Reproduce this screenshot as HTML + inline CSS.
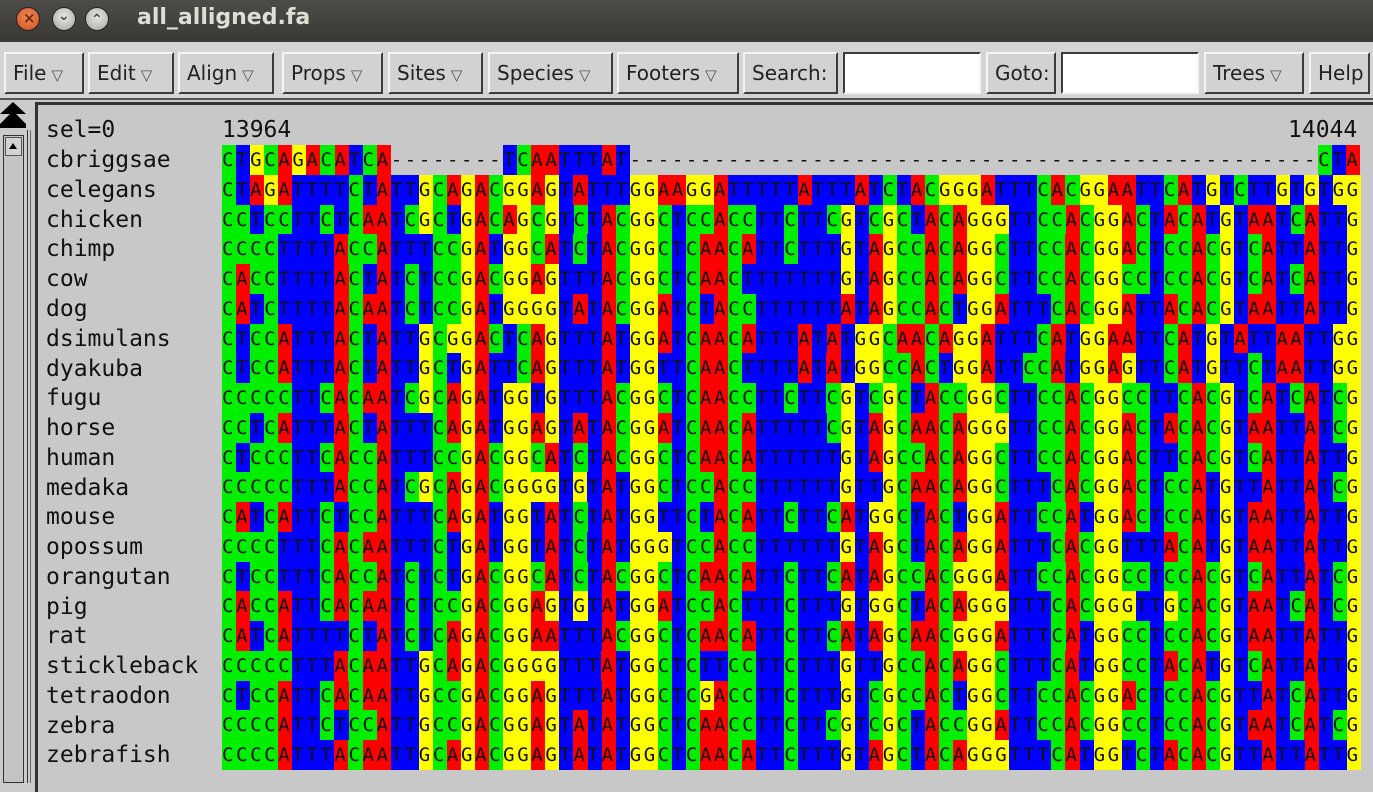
<!DOCTYPE html>
<html><head><meta charset="utf-8">
<style>
*{margin:0;padding:0;box-sizing:border-box}
body{width:1373px;height:783px;overflow:hidden;background:#cbcbcb;position:relative;font-family:"DejaVu Sans","Liberation Sans",sans-serif}
#title{position:absolute;left:0;top:0;width:1373px;height:42px;background:linear-gradient(#4d4c47,#3a3935);}
#title .t{position:absolute;left:137px;top:5px;font-size:22px;font-weight:bold;color:#e0ddd5}
.circ{position:absolute;width:24px;height:24px;border-radius:50%;top:7px}
#tb{position:absolute;left:0;top:42px;width:1373px;height:58px;background:#d4d4d4;border-bottom:2px solid #555}
.btn{position:absolute;top:10px;height:42px;background:#d2d2d2;border:2px solid;border-color:#f4f4f4 #3c3c3c #3c3c3c #f4f4f4;font-size:20px;color:#222;line-height:38px;padding-left:7px;white-space:nowrap}
.btn small{font-size:15px;color:#555;margin-left:5px}
.inp{position:absolute;top:10px;height:42px;background:#fff;border:2px solid;border-color:#3c3c3c #f4f4f4 #f4f4f4 #3c3c3c}
#panel{position:absolute;left:35px;top:102px;width:1340px;height:690px;border-left:3px solid #333;border-top:3px solid #333;background:#c8c8c8}
.nm{position:absolute;left:46px;font-family:"DejaVu Sans Mono","Liberation Mono",monospace;font-size:23px;color:#111;line-height:30px;white-space:pre}
.r{position:absolute;left:222px;height:30px;font-family:"DejaVu Sans Mono","Liberation Mono",monospace;font-size:19px;letter-spacing:2.61px;line-height:30px;color:#111;white-space:pre}
.r i,.r b,.r u,.r s,.r em{font-style:normal;font-weight:normal;text-decoration:none;display:inline-block;height:30px;vertical-align:top}
.r i{background:#ff0000}.r b{background:#00ee00}.r u{background:#ffff00}.r s{background:#0000ff}
</style></head><body>
<div id="title">
<div class="circ" style="left:16px;background:radial-gradient(circle at 50% 40%,#f08a5a,#d0501c);border:1px solid #222"><span style="position:absolute;left:6px;top:1px;font-size:15px;color:#6b2a10;font-weight:bold">×</span></div>
<div class="circ" style="left:52px;background:radial-gradient(circle at 50% 40%,#e8e6e0,#a8a6a0);border:1px solid #222"><span style="position:absolute;left:5px;top:0px;font-size:14px;color:#444;font-weight:bold">⌄</span></div>
<div class="circ" style="left:85px;background:radial-gradient(circle at 50% 40%,#e8e6e0,#a8a6a0);border:1px solid #222"><span style="position:absolute;left:5px;top:4px;font-size:14px;color:#444;font-weight:bold">⌃</span></div>
<div class="t">all_alligned.fa</div>
</div>
<div id="tb">
<div class="btn" style="left:4px;width:80px">File<small>▽</small></div>
<div class="btn" style="left:88px;width:86px">Edit<small>▽</small></div>
<div class="btn" style="left:178px;width:96px">Align<small>▽</small></div>
<div class="btn" style="left:282px;width:101px">Props<small>▽</small></div>
<div class="btn" style="left:388px;width:95px">Sites<small>▽</small></div>
<div class="btn" style="left:488px;width:125px">Species<small>▽</small></div>
<div class="btn" style="left:617px;width:122px">Footers<small>▽</small></div>
<div class="btn" style="left:743px;width:95px">Search:</div>
<div class="inp" style="left:843px;width:138px"></div>
<div class="btn" style="left:986px;width:70px">Goto:</div>
<div class="inp" style="left:1061px;width:138px"></div>
<div class="btn" style="left:1204px;width:100px">Trees<small>▽</small></div>
<div class="btn" style="left:1309px;width:61px">Help</div>
</div>
<svg style="position:absolute;left:0;top:100px" width="34" height="683">
<polygon points="13,2 26,14 0,14" fill="#000"/><polygon points="13,11 26,24 0,24" fill="#000"/><rect x="0" y="24" width="26" height="4" fill="#000"/>
<rect x="3.5" y="35.5" width="20" height="647" fill="#c4c4c4" stroke="#333"/>
<rect x="5.5" y="37.5" width="16" height="18" fill="#d2d2d2" stroke="#555"/>
<polygon points="13,43 17,49 9,49" fill="#000"/>
<line x1="27.5" y1="30" x2="27.5" y2="683" stroke="#333"/>
<line x1="30.5" y1="30" x2="30.5" y2="683" stroke="#666"/>
</svg>
<div id="panel"></div>

<div class="nm" style="top:115px">sel=0</div>
<div class="nm" style="top:115px;left:222px">13964</div>
<div class="nm" style="top:115px;left:1288px">14044</div>

<div class="nm" style="top:145px">cbriggsae</div>
<div class="nm" style="top:175px">celegans</div>
<div class="nm" style="top:205px">chicken</div>
<div class="nm" style="top:234px">chimp</div>
<div class="nm" style="top:264px">cow</div>
<div class="nm" style="top:294px">dog</div>
<div class="nm" style="top:324px">dsimulans</div>
<div class="nm" style="top:354px">dyakuba</div>
<div class="nm" style="top:383px">fugu</div>
<div class="nm" style="top:413px">horse</div>
<div class="nm" style="top:443px">human</div>
<div class="nm" style="top:473px">medaka</div>
<div class="nm" style="top:502px">mouse</div>
<div class="nm" style="top:532px">opossum</div>
<div class="nm" style="top:562px">orangutan</div>
<div class="nm" style="top:592px">pig</div>
<div class="nm" style="top:621px">rat</div>
<div class="nm" style="top:651px">stickleback</div>
<div class="nm" style="top:681px">tetraodon</div>
<div class="nm" style="top:711px">zebra</div>
<div class="nm" style="top:740px">zebrafish</div>

<div class="r" style="top:145px"><b>C</b><s>T</s><u>G</u><b>C</b><i>A</i><u>G</u><i>A</i><b>C</b><i>A</i><s>T</s><b>C</b><i>A</i><em>--------</em><s>T</s><b>C</b><i>AA</i><s>TTT</s><i>A</i><s>T</s><em>-------------------------------------------------</em><b>C</b><s>T</s><i>A</i></div>
<div class="r" style="top:175px"><b>C</b><s>T</s><i>A</i><u>G</u><i>A</i><s>TTTT</s><b>C</b><s>T</s><i>A</i><s>TT</s><u>G</u><b>C</b><i>A</i><u>G</u><i>A</i><b>C</b><u>GG</u><i>A</i><u>G</u><s>T</s><i>A</i><s>TTT</s><u>GG</u><i>AA</i><u>GG</u><i>A</i><s>TTTTT</s><i>A</i><s>TTT</s><i>A</i><s>T</s><b>C</b><s>T</s><i>A</i><b>C</b><u>GGG</u><i>A</i><s>TTT</s><b>C</b><i>A</i><b>C</b><u>GG</u><i>AA</i><s>TT</s><b>C</b><i>A</i><s>T</s><u>G</u><s>T</s><b>C</b><s>TT</s><u>G</u><s>T</s><u>G</u><s>T</s><u>GG</u></div>
<div class="r" style="top:205px"><b>CC</b><s>T</s><b>CC</b><s>TT</s><b>C</b><s>T</s><b>C</b><i>AA</i><s>T</s><b>C</b><u>G</u><b>C</b><s>T</s><u>G</u><i>A</i><b>C</b><i>A</i><u>G</u><b>C</b><u>G</u><s>T</s><b>C</b><s>T</s><i>A</i><b>C</b><u>GG</u><b>C</b><s>T</s><b>CC</b><i>A</i><b>CC</b><s>TT</s><b>C</b><s>TT</s><b>C</b><u>G</u><s>T</s><b>C</b><u>G</u><b>C</b><s>T</s><i>A</i><b>C</b><i>A</i><u>GGG</u><s>TT</s><b>CC</b><i>A</i><b>C</b><u>GG</u><i>A</i><b>C</b><s>T</s><i>A</i><b>C</b><i>A</i><s>T</s><u>G</u><s>T</s><i>AA</i><s>T</s><b>C</b><i>A</i><s>TT</s><u>G</u></div>
<div class="r" style="top:234.3px"><b>CCCC</b><s>TTTT</s><i>A</i><b>CC</b><i>A</i><s>TTT</s><b>CC</b><u>G</u><i>A</i><s>T</s><u>GG</u><b>C</b><i>A</i><s>T</s><b>C</b><s>T</s><i>A</i><b>C</b><u>GG</u><b>C</b><s>T</s><b>C</b><i>AA</i><b>C</b><i>A</i><s>TT</s><b>C</b><s>TTT</s><u>G</u><s>T</s><i>A</i><u>G</u><b>CC</b><i>A</i><b>C</b><i>A</i><u>GG</u><b>C</b><s>TT</s><b>CC</b><i>A</i><b>C</b><u>GG</u><i>A</i><b>C</b><s>T</s><b>CC</b><i>A</i><b>C</b><u>G</u><s>T</s><b>C</b><i>A</i><s>TT</s><i>A</i><s>TT</s><u>G</u></div>
<div class="r" style="top:264px"><b>C</b><i>A</i><b>CC</b><s>TTTT</s><i>A</i><b>C</b><s>T</s><i>A</i><s>T</s><b>C</b><s>T</s><b>CC</b><u>G</u><i>A</i><b>C</b><u>GG</u><i>A</i><u>G</u><s>TTT</s><i>A</i><b>C</b><u>GG</u><b>C</b><s>T</s><b>C</b><i>AA</i><b>C</b><s>TTTTTTT</s><u>G</u><s>T</s><i>A</i><u>G</u><b>CC</b><i>A</i><b>C</b><i>A</i><u>GG</u><b>C</b><s>TT</s><b>CC</b><i>A</i><b>C</b><u>GG</u><b>CC</b><s>T</s><b>CC</b><i>A</i><b>C</b><u>G</u><s>T</s><b>C</b><i>A</i><s>T</s><b>C</b><i>A</i><s>TT</s><u>G</u></div>
<div class="r" style="top:293.8px"><b>C</b><i>A</i><s>T</s><b>C</b><s>TTTT</s><i>A</i><b>C</b><i>AA</i><s>T</s><b>C</b><s>T</s><b>CC</b><u>G</u><i>A</i><s>T</s><u>GGGG</u><s>T</s><i>A</i><s>T</s><i>A</i><b>C</b><u>GG</u><i>A</i><s>T</s><b>C</b><s>T</s><i>A</i><b>CC</b><s>TTTTTT</s><i>A</i><s>T</s><i>A</i><u>G</u><b>CC</b><i>A</i><b>C</b><s>T</s><u>GG</u><i>A</i><s>TTT</s><b>C</b><i>A</i><b>C</b><u>GG</u><i>A</i><s>TT</s><i>A</i><b>C</b><i>A</i><b>C</b><u>G</u><s>T</s><i>AA</i><s>TT</s><i>A</i><s>TT</s><u>G</u></div>
<div class="r" style="top:323.6px"><b>C</b><s>T</s><b>CC</b><i>A</i><s>TTT</s><i>A</i><b>C</b><s>T</s><i>A</i><s>TT</s><u>G</u><b>C</b><u>GG</u><i>A</i><b>C</b><s>T</s><b>C</b><i>A</i><u>G</u><s>TTT</s><i>A</i><s>T</s><u>GG</u><i>A</i><s>T</s><b>C</b><i>AA</i><b>C</b><i>A</i><s>TTT</s><i>A</i><s>T</s><i>A</i><s>T</s><u>GG</u><b>C</b><i>AA</i><b>C</b><i>A</i><u>GG</u><i>A</i><s>TTT</s><b>C</b><i>A</i><s>T</s><u>GG</u><i>AA</i><s>TT</s><b>C</b><i>A</i><s>T</s><u>G</u><s>T</s><i>A</i><s>TT</s><i>AA</i><s>TT</s><u>GG</u></div>
<div class="r" style="top:353.3px"><b>C</b><s>T</s><b>CC</b><i>A</i><s>TTT</s><i>A</i><b>C</b><s>T</s><i>A</i><s>TT</s><u>G</u><b>C</b><s>T</s><u>G</u><i>A</i><s>TT</s><b>C</b><i>A</i><u>G</u><s>TTT</s><i>A</i><s>T</s><u>GG</u><s>TT</s><b>C</b><i>AA</i><b>C</b><s>TTTT</s><i>A</i><s>T</s><i>A</i><s>T</s><u>GG</u><b>CC</b><i>A</i><b>C</b><s>T</s><u>GG</u><i>A</i><s>TT</s><b>CC</b><i>A</i><s>T</s><u>GG</u><i>A</i><u>G</u><s>TT</s><b>C</b><i>A</i><s>T</s><u>G</u><s>TT</s><b>C</b><s>T</s><i>AA</i><s>TT</s><u>GG</u></div>
<div class="r" style="top:383.1px"><b>CCCCC</b><s>TT</s><b>C</b><i>A</i><b>C</b><i>AA</i><s>T</s><b>C</b><u>G</u><b>C</b><i>A</i><u>G</u><i>A</i><s>T</s><u>GG</u><s>T</s><u>G</u><s>TTT</s><i>A</i><b>C</b><u>GG</u><b>C</b><s>T</s><b>C</b><i>AA</i><b>CC</b><s>TT</s><b>C</b><s>TT</s><b>C</b><u>G</u><s>T</s><b>C</b><u>G</u><b>C</b><s>T</s><i>A</i><b>CC</b><u>GG</u><b>C</b><s>TT</s><b>CC</b><i>A</i><b>C</b><u>GG</u><b>CC</b><s>TT</s><b>C</b><i>A</i><b>C</b><u>G</u><s>T</s><b>C</b><i>A</i><s>T</s><b>C</b><i>A</i><s>T</s><b>C</b><u>G</u></div>
<div class="r" style="top:412.8px"><b>CC</b><s>T</s><b>C</b><i>A</i><s>TTT</s><i>A</i><b>C</b><s>T</s><i>A</i><s>TTT</s><b>C</b><i>A</i><u>G</u><i>A</i><s>T</s><u>GG</u><i>A</i><u>G</u><s>T</s><i>A</i><s>T</s><i>A</i><b>C</b><u>GG</u><i>A</i><s>T</s><b>C</b><i>AA</i><b>C</b><i>A</i><s>TTTTT</s><b>C</b><u>G</u><s>T</s><i>A</i><u>G</u><b>C</b><i>AA</i><b>C</b><i>A</i><u>GGG</u><s>TT</s><b>CC</b><i>A</i><b>C</b><u>GG</u><i>A</i><b>C</b><s>T</s><i>A</i><b>C</b><i>A</i><b>C</b><u>G</u><s>T</s><i>AA</i><s>TT</s><i>A</i><s>T</s><b>C</b><u>G</u></div>
<div class="r" style="top:442.6px"><b>C</b><s>T</s><b>CCC</b><s>TT</s><b>C</b><i>A</i><b>CC</b><i>A</i><s>TTT</s><b>CC</b><u>G</u><i>A</i><b>C</b><u>GG</u><b>C</b><i>A</i><s>T</s><b>C</b><s>T</s><i>A</i><b>C</b><u>GG</u><b>C</b><s>T</s><b>C</b><i>AA</i><b>C</b><i>A</i><s>TTTTTT</s><u>G</u><s>T</s><i>A</i><u>G</u><b>CC</b><i>A</i><b>C</b><i>A</i><u>GG</u><b>C</b><s>TT</s><b>CC</b><i>A</i><b>C</b><u>GG</u><i>A</i><b>C</b><s>TT</s><b>C</b><i>A</i><b>C</b><u>G</u><s>T</s><b>C</b><i>A</i><s>TT</s><i>A</i><s>TT</s><u>G</u></div>
<div class="r" style="top:472.4px"><b>CCCCC</b><s>TTT</s><i>A</i><b>CC</b><i>A</i><s>T</s><b>C</b><u>G</u><b>C</b><i>A</i><u>G</u><i>A</i><b>C</b><u>GGGG</u><s>T</s><u>G</u><s>T</s><i>A</i><s>T</s><u>GG</u><b>C</b><s>T</s><b>CC</b><i>A</i><b>CC</b><s>TTTTTT</s><u>G</u><s>TT</s><u>G</u><b>C</b><i>AA</i><b>C</b><i>A</i><u>GG</u><b>C</b><s>TTT</s><b>C</b><i>A</i><b>C</b><u>GG</u><i>A</i><b>C</b><s>T</s><b>CC</b><i>A</i><s>T</s><u>G</u><s>TT</s><i>A</i><s>TT</s><i>A</i><s>T</s><b>C</b><u>G</u></div>
<div class="r" style="top:502.1px"><b>C</b><i>A</i><s>T</s><b>C</b><i>A</i><s>TT</s><b>C</b><s>T</s><b>CC</b><i>A</i><s>TTT</s><b>C</b><i>A</i><u>G</u><i>A</i><s>T</s><u>GG</u><s>T</s><i>A</i><s>T</s><b>C</b><s>T</s><i>A</i><s>T</s><u>GG</u><s>TT</s><b>C</b><s>T</s><i>A</i><b>C</b><i>A</i><s>TT</s><b>C</b><s>TT</s><b>C</b><i>A</i><s>T</s><u>GG</u><b>C</b><s>T</s><i>A</i><b>C</b><s>T</s><u>GG</u><i>A</i><s>TT</s><b>CC</b><i>A</i><s>T</s><u>GG</u><i>A</i><b>C</b><s>T</s><b>CC</b><i>A</i><s>T</s><u>G</u><s>T</s><i>AA</i><s>TT</s><i>A</i><s>TT</s><u>G</u></div>
<div class="r" style="top:531.9px"><b>CCCC</b><s>TTT</s><b>C</b><i>A</i><b>C</b><i>AA</i><s>TTT</s><b>C</b><s>T</s><u>G</u><i>A</i><s>T</s><u>GG</u><s>T</s><i>A</i><s>T</s><b>C</b><s>T</s><i>A</i><s>T</s><u>GGG</u><s>T</s><b>CC</b><i>A</i><b>CC</b><s>TTTTTT</s><u>G</u><s>T</s><i>A</i><u>G</u><b>C</b><s>T</s><i>A</i><b>C</b><i>A</i><u>GG</u><i>A</i><s>TTT</s><b>C</b><i>A</i><b>C</b><u>GG</u><s>TTT</s><i>A</i><b>C</b><i>A</i><s>T</s><u>G</u><s>T</s><i>AA</i><s>TT</s><i>A</i><s>TT</s><u>G</u></div>
<div class="r" style="top:561.6px"><b>C</b><s>T</s><b>CC</b><s>TTT</s><b>C</b><i>A</i><b>CC</b><i>A</i><s>T</s><b>C</b><s>T</s><b>C</b><s>T</s><u>G</u><i>A</i><b>C</b><u>GG</u><b>C</b><i>A</i><s>T</s><b>C</b><s>T</s><i>A</i><b>C</b><u>GG</u><b>C</b><s>T</s><b>C</b><i>AA</i><b>C</b><i>A</i><s>TT</s><b>C</b><s>TT</s><b>C</b><i>A</i><s>T</s><i>A</i><u>G</u><b>CC</b><i>A</i><b>C</b><u>GGG</u><i>A</i><s>TT</s><b>CC</b><i>A</i><b>C</b><u>GG</u><b>CC</b><s>T</s><b>CC</b><i>A</i><b>C</b><u>G</u><s>T</s><b>C</b><i>A</i><s>TT</s><i>A</i><s>T</s><b>C</b><u>G</u></div>
<div class="r" style="top:591.4px"><b>C</b><i>A</i><b>CC</b><i>A</i><s>TT</s><b>C</b><i>A</i><b>C</b><i>AA</i><s>T</s><b>C</b><s>T</s><b>CC</b><u>G</u><i>A</i><b>C</b><u>GG</u><i>A</i><u>G</u><s>T</s><u>G</u><s>T</s><i>A</i><s>T</s><u>GG</u><i>A</i><s>T</s><b>CC</b><i>A</i><b>C</b><s>TTT</s><b>C</b><s>TTT</s><u>G</u><s>T</s><u>GG</u><b>C</b><s>T</s><i>A</i><b>C</b><i>A</i><u>GGG</u><s>TTT</s><b>C</b><i>A</i><b>C</b><u>GGG</u><s>TT</s><u>G</u><b>C</b><i>A</i><b>C</b><u>G</u><s>T</s><i>AA</i><s>T</s><b>C</b><i>A</i><s>T</s><b>C</b><u>G</u></div>
<div class="r" style="top:621.1px"><b>C</b><i>A</i><s>T</s><b>C</b><i>A</i><s>TTTT</s><b>C</b><s>T</s><i>A</i><s>T</s><b>C</b><s>T</s><b>C</b><i>A</i><u>G</u><i>A</i><b>C</b><u>GG</u><i>AA</i><s>TTT</s><i>A</i><b>C</b><u>GG</u><b>C</b><s>T</s><b>C</b><i>AA</i><b>C</b><i>A</i><s>TT</s><b>C</b><s>TT</s><b>C</b><i>A</i><s>T</s><i>A</i><u>G</u><b>C</b><i>AA</i><b>C</b><u>GGG</u><i>A</i><s>TTT</s><b>C</b><i>A</i><s>T</s><u>GG</u><b>CC</b><s>T</s><b>CC</b><i>A</i><b>C</b><u>G</u><s>T</s><i>AA</i><s>TT</s><i>A</i><s>TT</s><u>G</u></div>
<div class="r" style="top:650.9px"><b>CCCCC</b><s>TTT</s><i>A</i><b>C</b><i>AA</i><s>TT</s><u>G</u><b>C</b><i>A</i><u>G</u><i>A</i><b>C</b><u>GGGG</u><s>TTT</s><i>A</i><s>T</s><u>GG</u><b>C</b><s>T</s><b>C</b><s>TT</s><b>CC</b><s>TT</s><b>C</b><s>TTT</s><u>G</u><s>TT</s><u>G</u><b>CC</b><i>A</i><b>C</b><i>A</i><u>GG</u><b>C</b><s>TTT</s><b>C</b><i>A</i><s>T</s><u>GG</u><b>CC</b><s>T</s><i>A</i><b>C</b><i>A</i><s>T</s><u>G</u><s>T</s><b>C</b><i>A</i><s>TT</s><i>A</i><s>TT</s><u>G</u></div>
<div class="r" style="top:680.6px"><b>C</b><s>T</s><b>CC</b><i>A</i><s>TT</s><b>C</b><i>A</i><b>C</b><i>AA</i><s>TT</s><u>G</u><b>CC</b><u>G</u><i>A</i><b>C</b><u>GG</u><i>A</i><u>G</u><s>TTT</s><i>A</i><s>T</s><u>GG</u><b>C</b><s>T</s><b>C</b><u>G</u><i>A</i><b>CC</b><s>TT</s><b>C</b><s>TTT</s><u>G</u><s>T</s><b>C</b><u>G</u><b>CC</b><i>A</i><b>C</b><s>T</s><u>GG</u><b>C</b><s>TT</s><b>CC</b><i>A</i><b>C</b><u>GG</u><i>A</i><b>C</b><s>T</s><b>CC</b><i>A</i><b>C</b><u>G</u><s>TT</s><i>A</i><s>T</s><b>C</b><i>A</i><s>TT</s><u>G</u></div>
<div class="r" style="top:710.4px"><b>CCCC</b><i>A</i><s>TT</s><b>C</b><s>T</s><b>CC</b><i>A</i><s>TT</s><u>G</u><b>CC</b><u>G</u><i>A</i><b>C</b><u>GG</u><i>A</i><u>G</u><s>T</s><i>A</i><s>T</s><i>A</i><s>T</s><u>GG</u><b>C</b><s>T</s><b>C</b><i>AA</i><b>CC</b><s>TT</s><b>C</b><s>TT</s><b>C</b><u>G</u><s>T</s><b>C</b><u>G</u><b>C</b><s>T</s><i>A</i><b>CC</b><u>GG</u><i>A</i><s>TT</s><b>CC</b><i>A</i><b>C</b><u>GG</u><b>CC</b><s>T</s><b>CC</b><i>A</i><b>C</b><u>G</u><s>T</s><i>AA</i><s>T</s><b>C</b><i>A</i><s>T</s><b>C</b><u>G</u></div>
<div class="r" style="top:740.2px"><b>CCCC</b><i>A</i><s>TTT</s><i>A</i><b>C</b><i>AA</i><s>TT</s><u>G</u><b>C</b><i>A</i><u>G</u><i>A</i><b>C</b><u>GG</u><i>A</i><u>G</u><s>T</s><i>A</i><s>T</s><i>A</i><s>T</s><u>GG</u><b>C</b><s>T</s><b>C</b><i>AA</i><b>C</b><i>A</i><s>TT</s><b>C</b><s>TTT</s><u>G</u><s>T</s><i>A</i><u>G</u><b>C</b><s>T</s><i>A</i><b>C</b><i>A</i><u>GGG</u><s>TTT</s><b>C</b><i>A</i><s>T</s><u>GG</u><s>T</s><b>C</b><s>T</s><i>A</i><b>C</b><i>A</i><b>C</b><u>G</u><s>TT</s><i>A</i><s>TT</s><i>A</i><s>TT</s><u>G</u></div>
</body></html>
